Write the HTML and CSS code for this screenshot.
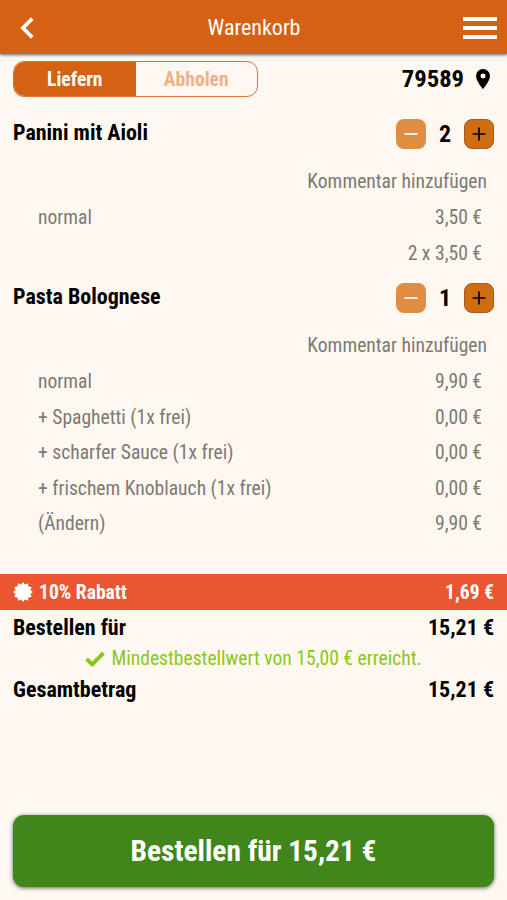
FILE: index.html
```
<!DOCTYPE html>
<html lang="de">
<head>
    <meta charset="UTF-8">
    <meta name="viewport" content="width=device-width, initial-scale=1.0">
    <title>Warenkorb</title>
    <link rel="stylesheet" href="styles.css">
</head>
<body>
    <header class="header">
        <svg class="back" viewBox="0 0 14 22"><path d="M12.3 1.5 L3 11 L12.3 20.5"/></svg>
        <h1>Warenkorb</h1>
        <div class="menu"><span></span><span></span><span></span></div>
    </header>

    <div class="delivery">
        <div class="toggle">
            <div class="option active">Liefern</div>
            <div class="option">Abholen</div>
        </div>
        <div class="zip">
            <span>79589</span>
            <svg class="pin" viewBox="0 0 14 20"><path fill-rule="evenodd" d="M7 0a7 7 0 0 0-7 7c0 5 7 13 7 13s7-8 7-13a7 7 0 0 0-7-7zm0 4.5a2.5 2.5 0 1 1 0 5 2.5 2.5 0 0 1 0-5z"/></svg>
        </div>
    </div>

    <div class="item">
        <div class="item-head">
            <h2>Panini mit Aioli</h2>
            <div class="stepper">
                <button class="minus"><svg viewBox="0 0 14 14"><path d="M.5 7h13"/></svg></button>
                <span class="count">2</span>
                <button class="plus"><svg viewBox="0 0 14 14"><path d="M.5 7h13M7 .5v13"/></svg></button>
            </div>
        </div>
        <div class="comment">Kommentar hinzufügen</div>
        <div class="line"><span>normal</span><span>3,50 €</span></div>
        <div class="line"><span></span><span>2 x 3,50 €</span></div>
    </div>

    <div class="item">
        <div class="item-head">
            <h2>Pasta Bolognese</h2>
            <div class="stepper">
                <button class="minus"><svg viewBox="0 0 14 14"><path d="M.5 7h13"/></svg></button>
                <span class="count">1</span>
                <button class="plus"><svg viewBox="0 0 14 14"><path d="M.5 7h13M7 .5v13"/></svg></button>
            </div>
        </div>
        <div class="comment">Kommentar hinzufügen</div>
        <div class="line"><span>normal</span><span>9,90 €</span></div>
        <div class="line"><span>+ Spaghetti (1x frei)</span><span>0,00 €</span></div>
        <div class="line"><span>+ scharfer Sauce (1x frei)</span><span>0,00 €</span></div>
        <div class="line"><span>+ frischem Knoblauch (1x frei)</span><span>0,00 €</span></div>
        <div class="line"><span>(Ändern)</span><span>9,90 €</span></div>
    </div>

    <div class="discount">
        <svg class="badge" viewBox="-10 -10 20 20"><path d="M0-10 1.9-7.4 5-8.7 5.4-5.4 8.7-5 7.4-1.9 10 0 7.4 1.9 8.7 5 5.4 5.4 5 8.7 1.9 7.4 0 10-1.9 7.4-5 8.7-5.4 5.4-8.7 5-7.4 1.9-10 0-7.4-1.9-8.7-5-5.4-5.4-5-8.7-1.9-7.4z"/></svg>
        <span>10% Rabatt</span>
        <span class="amount">1,69 €</span>
    </div>
    <div class="total"><span>Bestellen für</span><span>15,21 €</span></div>
    <div class="minimum">
        <svg class="check" viewBox="0 0 20 16"><path d="M1.5 8 7.3 13.3 18.5 2"/></svg>
        <span>Mindestbestellwert von 15,00 € erreicht.</span>
    </div>
    <div class="total"><span>Gesamtbetrag</span><span>15,21 €</span></div>

    <button class="order">Bestellen für 15,21 €</button>
</body>
</html>
```
FILE: styles.css
```
* {
    box-sizing: border-box;
}
body {
    margin: 0;
    height: 900px;
    display: flex;
    flex-direction: column;
    font-family: "Roboto Condensed", Roboto, sans-serif;
    font-stretch: 75%;
    font-size: 19.6px;
    color: #000;
    background-color: #fef8f1;
}
h1, h2 {
    margin: 0;
}
button {
    font: inherit;
    font-stretch: 75%;
    border: none;
    padding: 0;
}
.header {
    height: 54px;
    padding: 2px 10px 0 20px;
    display: flex;
    align-items: center;
    justify-content: space-between;
    background-color: #d56115;
    color: #fff;
    box-shadow: 0 1px 3px rgba(0, 0, 0, 0.6);
}
.header h1 {
    font-size: 22px;
    font-weight: 450;
    margin: 0 0 2px 11px;
}
.back {
    width: 14px;
    height: 22px;
    fill: none;
    stroke: #fff;
    stroke-width: 3.8;
}
.menu {
    width: 34px;
    display: flex;
    flex-direction: column;
    gap: 5px;
}
.menu span {
    height: 4px;
    background-color: #fff;
}
.delivery {
    height: 61px;
    padding: 7px 17px 0 13px;
    display: flex;
    justify-content: space-between;
    align-items: flex-start;
}
.toggle {
    width: 245px;
    height: 36px;
    display: flex;
    border: 1px solid #d9743a;
    border-radius: 11px;
    overflow: hidden;
}
.option {
    flex: 1;
    line-height: 35px;
    text-align: center;
    font-weight: 700;
    color: #efb08a;
}
.option.active {
    background-color: #d56115;
    color: #fff;
}
.zip {
    height: 35px;
    display: flex;
    align-items: center;
    gap: 12px;
    font-size: 24.6px;
    font-weight: 700;
}
.pin {
    width: 14px;
    height: 20px;
}
.item {
    padding: 4px 13px 8px;
}
.item-head {
    height: 44px;
    display: flex;
    justify-content: space-between;
    align-items: flex-start;
}
.item-head h2 {
    font-size: 22px;
    line-height: 27px;
}
.stepper {
    display: flex;
    align-items: center;
}
.stepper button {
    width: 30px;
    height: 30px;
    border-radius: 8px;
    display: flex;
    align-items: center;
    justify-content: center;
}
.stepper svg {
    width: 14px;
    height: 14px;
    stroke-width: 1.7;
}
.minus {
    background-color: #df8d43;
    stroke: #fff;
}
.stepper .plus {
    background-color: #cf6d12;
    stroke: #000;
    border: 1px solid #a5591a;
}
.count {
    width: 38px;
    text-align: center;
    font-size: 24px;
    line-height: 30px;
    font-weight: 700;
}
.comment {
    padding-right: 7px;
    text-align: right;
    height: 37px;
    line-height: 37px;
    color: #7d7974;
}
.line {
    padding: 0 12px 0 25px;
    height: 35.5px;
    line-height: 35.5px;
    display: flex;
    justify-content: space-between;
    color: #7d7974;
}
.discount {
    height: 36px;
    margin: 24.5px 0 1px;
    padding: 0 13px;
    display: flex;
    align-items: center;
    font-weight: 700;
    color: #fff;
    background-color: #ea5532;
}
.badge {
    width: 20px;
    height: 20px;
    margin-right: 6px;
    fill: #fff;
}
.amount {
    margin-left: auto;
}
.total {
    padding: 0 13px;
    line-height: 33px;
    display: flex;
    justify-content: space-between;
    font-size: 22px;
    font-weight: 700;
}
.minimum {
    height: 29px;
    display: flex;
    align-items: center;
    justify-content: center;
    gap: 6px;
    color: #88c917;
}
.check {
    width: 20px;
    height: 16px;
    fill: none;
    stroke: #88c917;
    stroke-width: 4;
}
.order {
    height: 72px;
    margin: auto 13px 13px;
    border-radius: 11px;
    font-size: 29.4px;
    font-weight: 700;
    color: #fff;
    background-color: #41861a;
    box-shadow: 0 1px 4px rgba(0, 0, 0, 0.6);
}
```
